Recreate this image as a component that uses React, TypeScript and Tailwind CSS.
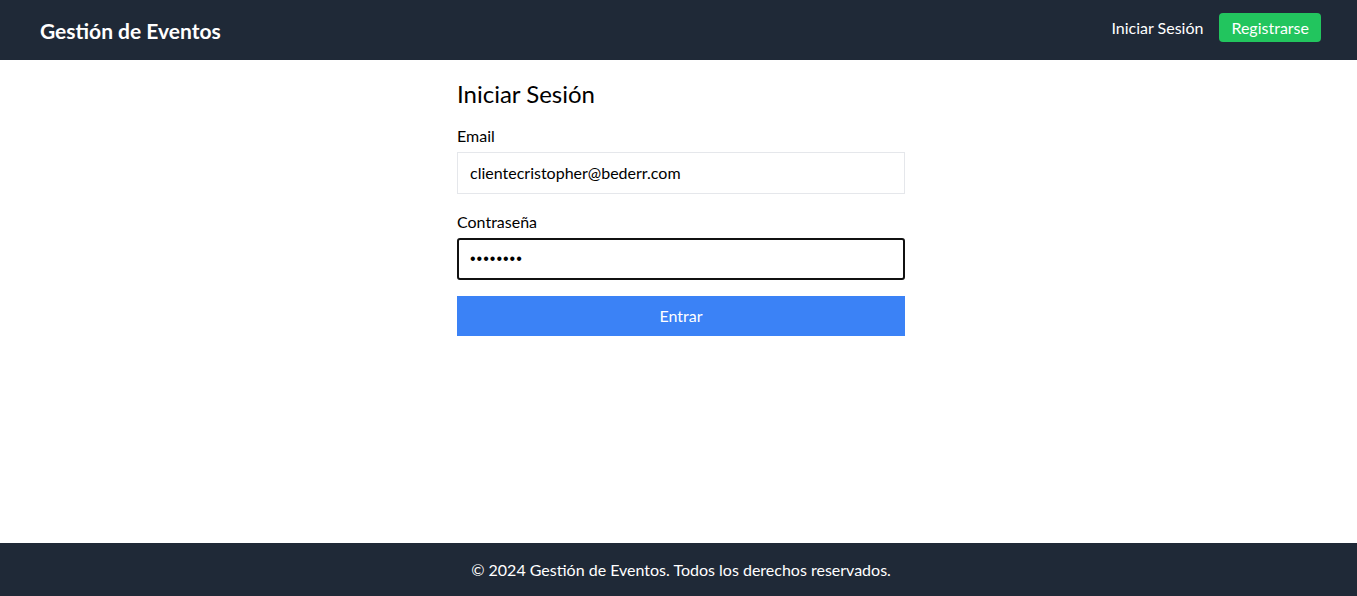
import React, { useState } from "react";

// Página de inicio de sesión: cabecera, formulario y pie
export default function App() {
  const [email, setEmail] = useState("clientecristopher@bederr.com");
  const [password, setPassword] = useState("12345678");

  return (
    <div
      className="min-h-screen flex flex-col bg-white text-black"
      style={{ fontFamily: "Lato, 'Noto Sans', sans-serif" }}
    >
      <header className="bg-[#1f2937] h-[60px] flex items-center justify-between pl-10 pr-9">
        <h1 className="text-white text-[21px] font-bold mt-[1px]">Gestión de Eventos</h1>
        <nav className="flex items-center gap-4 mb-[5px]">
          <a href="#" className="text-white text-base">
            Iniciar Sesión
          </a>
          <a
            href="#"
            className="bg-[#22c55e] text-white text-base h-[29px] px-3 rounded flex items-center"
          >
            Registrarse
          </a>
        </nav>
      </header>

      <main className="flex-1 flex justify-center pl-[5px] pt-[18px]">
        <form className="w-[448px]" onSubmit={(e) => e.preventDefault()}>
          <h2 className="text-2xl mb-[14px]">Iniciar Sesión</h2>
          <div className="mb-4">
            <label className="block text-base mb-1">Email</label>
            <input
              type="email"
              value={email}
              onChange={(e) => setEmail(e.target.value)}
              className="w-full border border-[#e5e7eb] px-3 py-2 text-base outline-none"
            />
          </div>
          <div className="mb-4">
            <label className="block text-base mb-1">Contraseña</label>
            <input
              type="password"
              value={password}
              onChange={(e) => setPassword(e.target.value)}
              className="w-full border-2 border-[#111] rounded-[3px] px-[11px] py-[7px] text-base outline-none tracking-[1px] font-['Liberation_Sans',sans-serif]"
            />
          </div>
          <button
            type="submit"
            className="w-full bg-[#3b82f6] text-white text-base py-2"
          >
            Entrar
          </button>
        </form>
      </main>

      <footer className="bg-[#1f2937] h-[53px] flex items-center justify-center pl-[5px]">
        <p className="text-white text-base">
          © 2024 Gestión de Eventos. Todos los derechos reservados.
        </p>
      </footer>
    </div>
  );
}
